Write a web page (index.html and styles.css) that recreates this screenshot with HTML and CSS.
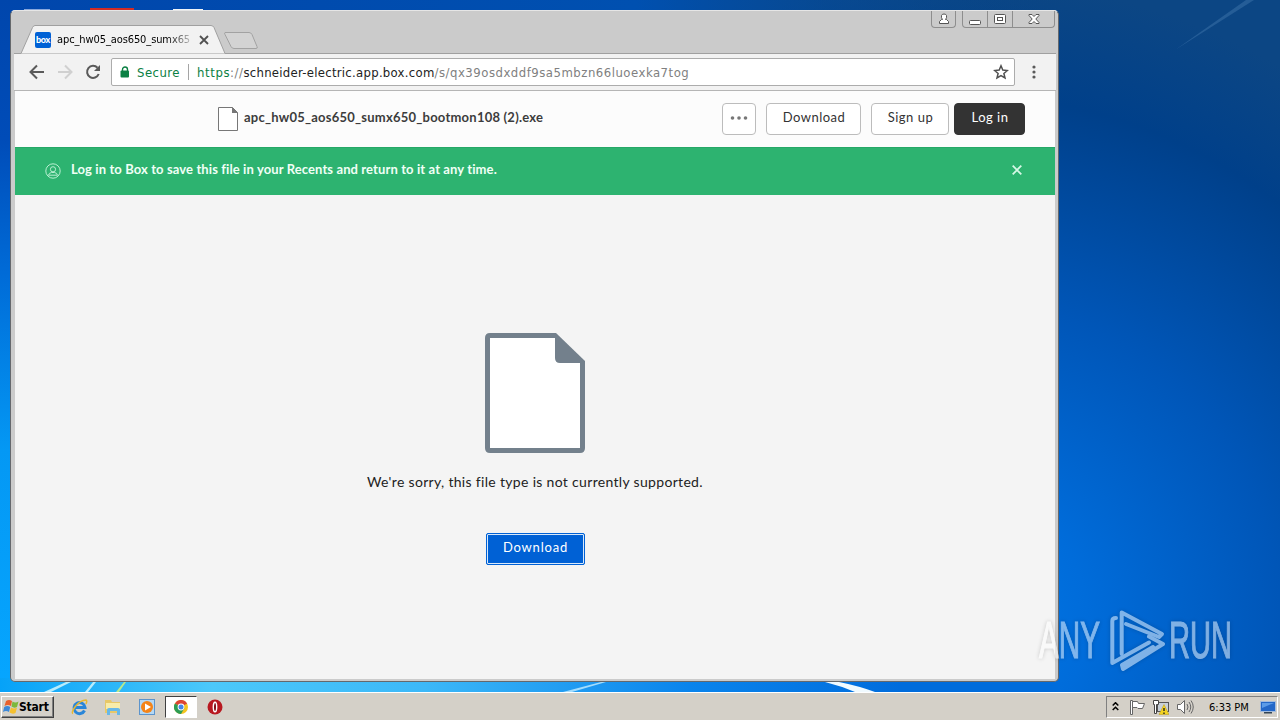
FILE: index.html
```html
<!DOCTYPE html>
<html lang="en">
<head>
  <meta charset="UTF-8">
  <title>apc_hw05_aos650_sumx650_bootmon108 (2).exe</title>
  <link rel="stylesheet" href="styles.css">
</head>
<body>
  <div class="desktop">
    <svg class="wallpaper" width="1280" height="692" viewBox="0 0 1280 692">
      <defs>
        <linearGradient id="leftSky" x1="0" y1="0" x2="0" y2="1">
          <stop offset="0" stop-color="#0046ac"/>
          <stop offset=".2" stop-color="#004cb8"/>
          <stop offset=".4" stop-color="#006cd8"/>
          <stop offset=".65" stop-color="#0498f4"/>
          <stop offset="1" stop-color="#06a6ff"/>
        </linearGradient>
        <radialGradient id="rightSky" gradientUnits="userSpaceOnUse" cx="960" cy="620" r="640">
          <stop offset="0" stop-color="#0078e8"/>
          <stop offset=".2" stop-color="#006cda"/>
          <stop offset=".5" stop-color="#0056b8"/>
          <stop offset=".82" stop-color="#00408a"/>
          <stop offset="1" stop-color="#0c4684"/>
        </radialGradient>
        <linearGradient id="floor" x1="0" y1="0" x2="1" y2="0">
          <stop offset="0" stop-color="#06a2f8"/>
          <stop offset=".2" stop-color="#4cc8fa"/>
          <stop offset=".4" stop-color="#3cb8f8"/>
          <stop offset=".65" stop-color="#0a84ec"/>
          <stop offset=".85" stop-color="#006cdc"/>
        </linearGradient>
        <linearGradient id="top" x1="0" y1="0" x2="1" y2="0">
          <stop offset="0" stop-color="#0046ac"/>
          <stop offset=".6" stop-color="#0050b0"/>
          <stop offset="1" stop-color="#084688" stop-opacity="0"/>
        </linearGradient>
      </defs>
      <rect width="1280" height="692" fill="url(#rightSky)"/>
      <rect width="1060" height="20" fill="url(#top)"/>
      <rect width="40" height="692" fill="url(#leftSky)"/>
      <rect y="678" width="1060" height="14" fill="url(#floor)"/>
      <path d="M44 692l22-10h5l-20 10zM85 692l8-10h3l-8 10z" fill="#b8ecfc"/>
      <path d="M116 692l8-10h2l-7 10z" fill="#b8e88c"/>
      <path d="M563 692l38-10h5l-34 10z" fill="#a4dcfc"/>
      <path d="M825 682h14q20 4 36 10h-20q-14-6-30-10z" fill="#f0faff"/>
      <path d="M1175 50L1246 0h8z" fill="#4a80b4" opacity=".4"/>
      <path d="M24 10h26v-1H24z" fill="#8aa8dc"/>
      <path d="M90 8h44v3H90z" fill="#d42c24"/>
      <path d="M173 9h30v2h-30z" fill="#f0f4f8"/>
    </svg>

    <div class="window">
      <div class="titlebar">
        <svg class="tab-shape" width="250" height="30" viewBox="0 0 250 30">
          <path d="M0 29.500H7L18.500 3.500Q19.500 1.500 21 1.500H197Q199 1.500 200 3.500L211 29.500H250V30H0z" fill="#f2f2f2" stroke="#a0a0a0"/>
          <path d="M211 8.500h24q2 0 3 2l5 12q1 2-1 2h-22q-2 0-3-2l-6-12q-1-2 0-2z" fill="#d3d3d3" stroke="#a2a2a2"/>
        </svg>
        <div class="tab">
          <span class="favicon">box</span>
          <span class="tab-title">apc_hw05_aos650_sumx65</span>
          <svg class="tab-close" width="10" height="10" viewBox="0 0 10 10"><path d="M1 1l8 8M9 1L1 9" stroke="#505050" stroke-width="1.800"/></svg>
        </div>
        <div class="controls">
          <span class="control user"><svg width="12" height="12" viewBox="0 0 12 12" fill="#fff" stroke="#555"><path d="M1.500 10.500v-2l2-2h1Q3 5 3.500 2.500Q4 1 6 1T8.500 2.500Q9 5 7.500 6.500h1l2 2v2z"/></svg></span>
          <span class="control-group">
            <span class="control min"><svg width="12" height="12" viewBox="0 0 12 12"><rect x=".5" y="7.500" width="11" height="4" rx="1" fill="#fff" stroke="#555"/></svg></span>
            <span class="control max"><svg width="12" height="12" viewBox="0 0 12 12" fill="#fff" stroke="#555"><rect x=".5" y="1.500" width="11" height="9" rx="1"/><rect x="3.500" y="4.500" width="5" height="3"/></svg></span>
            <span class="control exit"><svg width="12" height="12" viewBox="0 0 12 12"><path d="M1 1.500h3l2 2 2-2h3v1L7.800 6l3.200 3.500v1H8l-2-2-2 2H1v-1L4.200 6 1 2.500z" fill="#fff" stroke="#555"/></svg></span>
          </span>
        </div>
      </div>

      <div class="toolbar">
        <svg class="nav" width="76" height="18" viewBox="0 0 76 18" fill="none" stroke-width="2">
          <path d="M17 9H4M10 2.500L3.500 9 10 15.500" stroke="#5a5a5a"/>
          <path d="M31 9h13M38 2.500L44.500 9 38 15.500" stroke="#d0d0d0"/>
          <path d="M70.500 4.800A6 6 0 1 0 71.700 11" stroke="#5a5a5a"/>
          <path d="M73 2v6h-6z" fill="#5a5a5a"/>
        </svg>
        <div class="address">
          <svg width="10" height="12" viewBox="0 0 10 12"><path d="M2.500 5V3.500a2.500 2.500 0 0 1 5 0V5" fill="none" stroke="#0b8043" stroke-width="1.400"/><rect x=".5" y="4.500" width="8.500" height="7" rx="1" fill="#0b8043"/></svg>
          <span class="secure">Secure</span>
          <span class="divider"></span>
          <span class="url"><span class="scheme">https</span><span class="path">://</span><span class="host">schneider-electric.app.box.com</span><span class="path">/s/qx39osdxddf9sa5mbzn66luoexka7tog</span></span>
          <svg class="star" width="16" height="16" viewBox="0 0 16 16"><path d="M8 1.800l1.800 4.300 4.600.4-3.500 3 1.100 4.500-4-2.400-4 2.400 1.100-4.500-3.500-3 4.600-.4z" fill="none" stroke="#505050" stroke-width="1.500"/></svg>
        </div>
        <svg class="menu" width="4" height="14" viewBox="0 0 4 14" fill="#5a5a5a"><circle cx="2" cy="2" r="1.600"/><circle cx="2" cy="7" r="1.600"/><circle cx="2" cy="12" r="1.600"/></svg>
      </div>

      <div class="page">
        <div class="file-header">
          <svg class="file-icon" width="20" height="24" viewBox="0 0 20 24"><path d="M.5.500h14l5 5v18H.5z" fill="#fff" stroke="#777"/><path d="M14 0l6 6h-6z" fill="#777"/></svg>
          <span class="file-name">apc_hw05_aos650_sumx650_bootmon108 (2).exe</span>
          <div class="actions">
            <button class="btn more"><svg width="18" height="4" viewBox="0 0 18 4" fill="#777"><circle cx="2.500" cy="2" r="1.800"/><circle cx="9" cy="2" r="1.800"/><circle cx="15.500" cy="2" r="1.800"/></svg></button>
            <button class="btn download">Download</button>
            <button class="btn signup">Sign up</button>
            <button class="btn login">Log in</button>
          </div>
        </div>
        <div class="notice">
          <svg width="16" height="16" viewBox="0 0 16 16" fill="none" stroke="#b9efd1"><circle cx="8" cy="8" r="7.200"/><circle cx="8" cy="6.300" r="2.600"/><path d="M3.500 12.200Q4 9.800 6.500 9.500h3q2.500.3 3 2.700z"/></svg>
          <span class="notice-text">Log in to Box to save this file in your Recents and return to it at any time.</span>
          <svg class="notice-close" width="10" height="10" viewBox="0 0 10 10"><path d="M.7.700l8.600 8.600M9.300.700L.7 9.300" stroke="#d6f8e6" stroke-width="1.800"/></svg>
        </div>
        <div class="preview">
          <svg width="100" height="120" viewBox="0 0 100 120">
            <path d="M5 0H71L100 28V115Q100 120 95 120H5Q0 120 0 115V5Q0 0 5 0z" fill="#73808c"/>
            <path d="M5 5H70V25Q70 30 75 30H95V115H5z" fill="#fff"/>
          </svg>
          <p class="sorry">We're sorry, this file type is not currently supported.</p>
          <button class="btn-primary">Download</button>
        </div>
      </div>
    </div>

    <svg class="watermark" width="206" height="64" viewBox="0 0 206 64">
      <g fill="#fff" stroke="#fff" stroke-width="1.200">
        <text x="1" y="49" textLength="61" lengthAdjust="spacingAndGlyphs">ANY</text>
        <text x="131" y="49" textLength="63" lengthAdjust="spacingAndGlyphs">RUN</text>
      </g>
      <g transform="translate(71 0)" fill="none" stroke="#fff" stroke-width="4" stroke-linejoin="round" stroke-linecap="round">
        <path d="M7 9Q3.300 9 3.300 12V54L40 33.500"/>
        <path d="M12.700 45V3.500L53 25L50 28L17 15"/>
        <path d="M40 27.500L54 35L14 60L13 56L44 38"/>
      </g>
    </svg>
  </div>

  <div class="taskbar">
    <div class="start">
      <svg width="16" height="16" viewBox="0 0 16 16"><path d="M3 2q3-2 6 0L8 7Q5 5 1.500 7z" fill="#e8602c"/><path d="M9.500 2.500q3 2 6 0L14 8q-3 1.500-5.500-.5z" fill="#7cb83c"/><path d="M1.200 8q3-2 6 0L6 13q-3-2-6 0z" fill="#3c88d8"/><path d="M8 8.500q3 2 6 0L12.500 14q-3 1.500-6-.5z" fill="#f4c030"/></svg>
      <span>Start</span>
    </div>
    <div class="launch">
      <span class="task"><svg width="18" height="18" viewBox="0 0 18 18" fill="none"><path d="M14.500 12.500A5.500 5.500 0 1 1 15 9.500H5" stroke="#2a86d8" stroke-width="3"/><path d="M3 15.500C0 15 8 2 16 2q1.500 .5 0 4" stroke="#e8b830" stroke-width="1.500"/></svg></span>
      <span class="task"><svg width="18" height="18" viewBox="0 0 18 18"><path d="M1 2h6l1 2h8v11H1z" fill="#e8c868"/><path d="M2 5h14v6H2z" fill="#f8ecaa"/><path d="M3 17v-5q0-2 2-2h9q2 0 2 2v5h-3v-4H6v4z" fill="#68b8e8"/></svg></span>
      <span class="task"><svg width="18" height="18" viewBox="0 0 18 18"><rect x="1.500" y="1.500" width="15" height="15" fill="#b4d8f4" stroke="#5c94cc"/><circle cx="9" cy="9" r="6" fill="#f48418"/><path d="M7 5.500l6 3.500-6 3.500z" fill="#fff"/></svg></span>
      <span class="task active"><svg width="14" height="14" viewBox="0 0 14 14"><circle cx="7" cy="7" r="7" fill="#f4c420"/><path d="M7 7L.9 3.500A7 7 0 0 1 13.100 3.500z" fill="#dc4434"/><path d="M7 7L.9 3.500A7 7 0 0 0 7 14l3.500-6z" fill="#2c9c54"/><circle cx="7" cy="7" r="3.400" fill="#fff"/><circle cx="7" cy="7" r="2.500" fill="#4486e8"/></svg></span>
      <span class="task"><svg width="16" height="16" viewBox="0 0 16 16"><circle cx="8" cy="8" r="7.500" fill="#b81820"/><ellipse cx="8" cy="8" rx="1.700" ry="4.800" fill="#801018" stroke="#fff" stroke-width="1.400"/></svg></span>
    </div>
    <div class="tray">
      <svg class="chevrons" width="7" height="10" viewBox="0 0 7 10" fill="none" stroke="#000" stroke-width="1.500"><path d="M.7 3.500L3.500.700 6.300 3.500M.7 8l2.800-2.800L6.300 8"/></svg>
      <svg class="flag" width="16" height="16" viewBox="0 0 16 16" fill="#fff" stroke="#666"><path d="M1.500 1.500h2v14h-2z"/><path d="M3.500 2.500h5l1 2h6l-2 5H9l-1-1H3.500z"/></svg>
      <svg class="network" width="16" height="16" viewBox="0 0 16 16"><rect x="4.500" y="3.500" width="11" height="9" fill="#c8d0d8" stroke="#555"/><path d="M.5 1.500h5v4h-2v9h-2v-9h-1z" fill="#fff" stroke="#444"/><path d="M11 5.500l5 10H6z" fill="#f4d420" stroke="#b89818" stroke-width=".5"/><path d="M11 9v3M11 13.500V15" stroke="#222" stroke-width="1.400"/></svg>
      <svg class="sound" width="17" height="16" viewBox="0 0 17 16" fill="#fff" stroke="#666"><path d="M.5 5.500h3l4-4v13l-4-4h-3z"/><path d="M10 5q2 3 0 6M12 3q3.500 5 0 10M14 1.500q4.500 6.500 0 13" fill="none"/></svg>
      <span class="clock">6:33 PM</span>
      <svg class="screen" width="16" height="14" viewBox="0 0 16 14"><path d="M.5 1.500h15v10H.5z" fill="#2468c8" stroke="#a4bcdc"/><path d="M2 3h12L2 8z" fill="#5c9ce8"/><path d="M4 12h8v1.500H4z" fill="#345"/></svg>
    </div>
  </div>
</body>
</html>
```

FILE: styles.css
```css
body {
  margin: 0;
  width: 1280px;
  height: 720px;
  overflow: hidden;
  display: flex;
  flex-direction: column;
  font-family: "DejaVu Sans Condensed", "DejaVu Sans", sans-serif;
}
svg {
  display: block;
  flex-shrink: 0;
}
span {
  white-space: nowrap;
}
.desktop {
  position: relative;
  height: 692px;
  flex-shrink: 0;
}
.wallpaper {
  position: absolute;
  left: 0;
  top: 0;
}

/* browser window */
.window {
  position: absolute;
  left: 10px;
  top: 10px;
  width: 1049px;
  height: 672px;
  box-sizing: border-box;
  border: 1px solid #65686c;
  border-top-color: #e6e6e6;
  border-radius: 5px;
  background: #cbcbcb;
  padding: 0 2px 2px 3px;
  display: flex;
  flex-direction: column;
  overflow: hidden;
}
.titlebar {
  position: relative;
  height: 43px;
  flex-shrink: 0;
  display: flex;
  justify-content: space-between;
  align-items: flex-start;
  border-bottom: 1px solid #a0a0a0;
  box-sizing: border-box;
}
.tab-shape {
  position: absolute;
  left: 0;
  top: 13px;
}
.tab {
  position: relative;
  display: flex;
  align-items: center;
  padding: 20px 0 0 21px;
}
.favicon {
  width: 16px;
  height: 16px;
  border-radius: 2px;
  background: #0061d5;
  color: #fff;
  font: 900 9px/16px "Lato", sans-serif;
  letter-spacing: -.3px;
  text-align: center;
}
.tab-title {
  width: 134px;
  margin-left: 6px;
  font-size: 11px;
  line-height: 18px;
  letter-spacing: -.1px;
  color: #000;
  -webkit-mask-image: linear-gradient(90deg, #000 110px, transparent 140px);
  mask-image: linear-gradient(90deg, #000 110px, transparent 140px);
}
.tab-close {
  margin-left: 8px;
}
.controls {
  display: flex;
  gap: 6px;
}
.control {
  display: flex;
  justify-content: center;
  align-items: center;
  height: 16px;
}
.user {
  width: 23px;
  border: 1px solid #8e8e8e;
  border-top: 0;
  border-radius: 0 0 4px 4px;
}
.control-group {
  display: flex;
  border: 1px solid #8e8e8e;
  border-top: 0;
  border-radius: 0 0 4px 4px;
  margin-right: 1px;
}
.min, .max {
  width: 24px;
  border-right: 1px solid #8e8e8e;
}
.exit {
  width: 41px;
}
.toolbar {
  height: 37px;
  box-sizing: border-box;
  flex-shrink: 0;
  display: flex;
  align-items: center;
  background: #f2f2f2;
  border-bottom: 1px solid #b5b5b5;
}
.nav {
  margin-left: 13px;
}
.address {
  width: 904px;
  height: 28px;
  box-sizing: border-box;
  margin-left: 8px;
  padding: 0 5px 0 8px;
  display: flex;
  align-items: center;
  background: #fff;
  border: 1px solid #acacac;
  border-radius: 2px;
  font-size: 13px;
}
.secure {
  margin-left: 7px;
  width: 43px;
  letter-spacing: .45px;
  color: #0b8043;
}
.divider {
  width: 1px;
  height: 16px;
  margin: 0 8px 0 8px;
  background: #a5a5a5;
}
.scheme {
  color: #0b8043;
  letter-spacing: .6px;
}
.host {
  color: #222;
  letter-spacing: .27px;
}
.path {
  color: #808080;
  letter-spacing: .5px;
}
.star {
  margin-left: auto;
}
.menu {
  margin-left: 17px;
}

/* web page */
.page {
  flex: 1;
  margin: 0 1px;
  display: flex;
  flex-direction: column;
  background: #f4f4f4;
  font-family: "Lato", sans-serif;
}
.file-header {
  height: 56px;
  flex-shrink: 0;
  display: flex;
  align-items: center;
  background: #fcfcfc;
  padding: 0 30px 0 203px;
}
.file-name {
  margin: -4px 0 0 6px;
  font-size: 13px;
  font-weight: bold;
  letter-spacing: .23px;
  color: #3c3c3c;
}
.actions {
  margin-left: auto;
  display: flex;
}
.btn {
  height: 32px;
  box-sizing: border-box;
  padding: 0 0 4px 1px;
  border: 1px solid #bcbcbc;
  border-radius: 4px;
  background: #fff;
  color: #333;
  font: 13px "Lato", sans-serif;
  letter-spacing: .5px;
}
.more {
  width: 34px;
  padding: 0 0 2px;
  display: flex;
  align-items: center;
  justify-content: center;
}
.download {
  width: 95px;
  margin-left: 10px;
}
.signup {
  width: 78px;
  margin-left: 10px;
}
.login {
  width: 71px;
  margin-left: 5px;
  background: #333;
  border-color: #333;
  color: #fff;
}
.notice {
  height: 48px;
  flex-shrink: 0;
  box-sizing: border-box;
  display: flex;
  align-items: center;
  padding: 0 33px 0 30px;
  background: #2db370;
  border-top: 1px solid #26a867;
}
.notice svg {
  margin-top: -2px;
}
.notice-text {
  margin: -5px 0 0 10px;
  font-size: 13px;
  font-weight: bold;
  letter-spacing: .11px;
  color: #f0fff6;
}
.notice .notice-close {
  margin: -4px 0 0 auto;
}
.preview {
  flex: 1;
  display: flex;
  flex-direction: column;
  align-items: center;
  padding-top: 138px;
}
.sorry {
  margin: 19px 0 0;
  font-size: 14px;
  line-height: 20px;
  letter-spacing: .32px;
  white-space: nowrap;
  color: #222;
}
.btn-primary {
  width: 99px;
  height: 32px;
  margin: 41px 0 0 1px;
  padding: 0 0 4px;
  border: 1px solid #0061d5;
  border-radius: 2px;
  background: #0061d5;
  box-shadow: inset 0 0 0 1px #d8e8fa;
  color: #fff;
  font: 13px "Lato", sans-serif;
  letter-spacing: .8px;
}

/* watermark over the desktop */
.watermark {
  position: absolute;
  left: 1038px;
  top: 609px;
  opacity: .5;
  font: 52px "Liberation Sans", sans-serif;
  filter: drop-shadow(0 0 2px rgba(0, 0, 0, .35));
  overflow: visible;
}

/* taskbar */
.taskbar {
  height: 28px;
  flex-shrink: 0;
  box-sizing: border-box;
  display: flex;
  background: #d4d0c8;
  border-top: 1px solid #fff;
  padding: 3px 2px 2px 1px;
}
.start {
  width: 53px;
  height: 22px;
  box-sizing: border-box;
  display: flex;
  align-items: center;
  padding-left: 1px;
  border: 1px solid;
  border-color: #fff #404040 #404040 #fff;
  box-shadow: inset -1px -1px #808080;
  font: bold 12px "DejaVu Sans Condensed", sans-serif;
  letter-spacing: -.2px;
}
.launch {
  display: flex;
  margin-left: 9px;
}
.task {
  width: 32px;
  height: 22px;
  box-sizing: border-box;
  margin-right: 2px;
  display: flex;
  align-items: center;
  justify-content: center;
}
.active {
  background: #fff;
  border: 1px solid;
  border-color: #404040 #fff #fff #404040;
}
.tray {
  margin-left: auto;
  width: 172px;
  height: 22px;
  box-sizing: border-box;
  display: flex;
  align-items: center;
  padding-left: 5px;
  border: 1px solid;
  border-color: #808080 #fff #fff #808080;
}
.flag {
  margin-left: 10px;
}
.network {
  margin-left: 8px;
}
.sound {
  margin-left: 8px;
}
.clock {
  margin-left: 15px;
  width: 41px;
  font-size: 11px;
}
.screen {
  margin-left: 10px;
}
```
